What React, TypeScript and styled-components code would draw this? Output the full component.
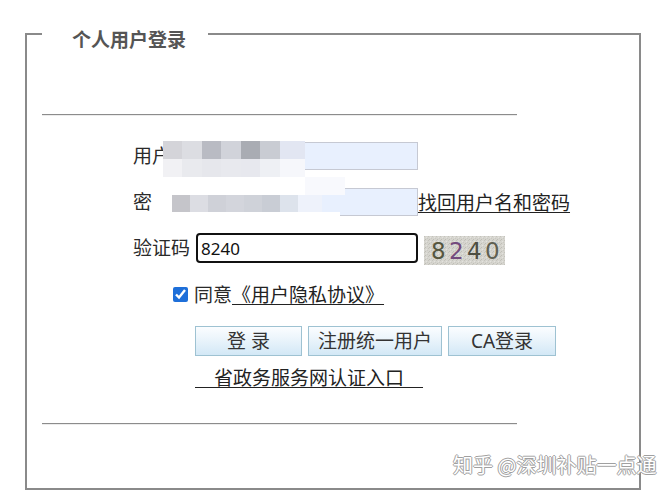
import React from 'react';
import styled, { createGlobalStyle } from 'styled-components';

const GlobalStyle = createGlobalStyle`
  html, body {
    margin: 0;
    padding: 0;
    background: #ffffff;
  }
  body {
    font-family: "Noto Sans", "Noto Sans CJK SC", sans-serif;
    color: #222;
  }
`;

const Page = styled.div`
  position: relative;
  width: 668px;
  height: 496px;
  padding-top: 16px;
  padding-left: 25px;
  box-sizing: border-box;
  overflow: hidden;
`;

const Panel = styled.fieldset`
  margin: 0;
  width: 616px;
  height: 474px;
  box-sizing: border-box;
  border: 2px solid #8a8a8a;
  padding: 0 0 0 15px;
  min-width: 0;
`;

const Legend = styled.legend`
  margin-left: 0;
  padding: 12px 22px 0 30px;
  font-size: 19px;
  line-height: 24px;
  font-weight: 700;
  color: #555;
`;

const Rule = styled.hr<{ $top: number }>`
  width: 475px;
  margin: ${p => p.$top}px 0 0 0;
  height: 0;
  border: 0;
  border-top: 1px solid #8c8c8c;
  border-bottom: 1px solid #ececec;
`;

const Form = styled.div`
  position: relative;
  padding-left: 91px;
  margin-top: 25px;
  display: flex;
  flex-direction: column;
`;

const Row = styled.div`
  display: flex;
  align-items: center;
  height: 30px;
  margin-bottom: 16px;
  font-size: 19px;
  color: #2a2a2a;
`;

const Label = styled.span`
  width: 63px;
  white-space: nowrap;
  line-height: 24px;
`;

const Field = styled.input<{ $focused?: boolean }>`
  width: 222px;
  box-sizing: border-box;
  height: ${p => (p.$focused ? 30 : 28)}px;
  font: inherit;
  font-size: 17px;
  color: #111;
  padding: 0 3px;
  outline: none;
  background: ${p => (p.$focused ? '#ffffff' : '#e8f0fe')};
  border: ${p => (p.$focused ? '2px solid #111' : '1px solid #c6c9d3')};
  border-radius: ${p => (p.$focused ? 4 : 0)}px;
`;

const TextLink = styled.a`
  color: #222;
  text-decoration: underline;
  text-underline-offset: 2px;
  text-decoration-thickness: 1px;
  font-size: 19px;
  white-space: nowrap;
  cursor: pointer;
`;

const Captcha = styled.svg`
  margin-left: 6px;
  margin-top: 4px;
  display: block;
`;

const AgreeRow = styled.label`
  display: flex;
  align-items: center;
  gap: 6px;
  padding-left: 40px;
  height: 22px;
  margin-top: 4px;
  font-size: 19px;
  color: #2a2a2a;
`;

const Check = styled.input`
  margin: 0;
  width: 15px;
  height: 15px;
  accent-color: #1e6fd9;
`;

const ButtonBar = styled.div`
  display: flex;
  gap: 6px;
  padding-left: 62px;
  margin-top: 21px;
`;

const ActionButton = styled.button<{ $w: number }>`
  width: ${p => p.$w}px;
  height: 30px;
  font-family: inherit;
  font-size: 19px;
  line-height: 26px;
  color: #333;
  padding: 0;
  border: 1px solid #9ec2d2;
  background: linear-gradient(#fbfdff 0%, #eaf4fb 45%, #d3e8f6 100%);
  cursor: pointer;
`;

const PortalRow = styled.div`
  padding-left: 62px;
  margin-top: 10px;
  line-height: 24px;
`;

const Mosaic = styled.div`
  position: absolute;
  left: 121px;
  top: 0;
  display: flex;
  flex-direction: column;
  pointer-events: none;
`;

const MosaicRow = styled.div<{ $h: number; $indent?: number }>`
  display: flex;
  height: ${p => p.$h}px;
  padding-left: ${p => p.$indent ?? 0}px;
`;

const Cell = styled.div<{ $w: number; $c: string }>`
  width: ${p => p.$w}px;
  height: 100%;
  background: ${p => p.$c};
`;

const Watermark = styled.div`
  position: absolute;
  left: 453px;
  top: 452px;
  font-family: "Noto Sans CJK SC", sans-serif;
  font-size: 20px;
  line-height: 26px;
  color: #ffffff;
  text-shadow: -1px 0 #a0a0a0, 1px 0 #a0a0a0, 0 -1px #a0a0a0, 0 1px #a0a0a0;
  white-space: nowrap;
`;

const blur: { h: number; indent?: number; cells: [number, string][] }[] = [
  {
    h: 18,
    cells: [
      [19, '#d4d4d9'], [20, '#dcdde2'], [19, '#b9bbc3'], [20, '#d1d3da'],
      [19, '#a9acb3'], [20, '#c9ccd3'], [25, '#e2e6f2'],
    ],
  },
  {
    h: 18,
    cells: [
      [19, '#f1f1f4'], [20, '#e9eaee'], [19, '#e6e7ec'], [20, '#e8e9ee'],
      [19, '#e7e8ee'], [20, '#eef0f4'], [25, '#f6f7fb'],
    ],
  },
  { h: 18, cells: [[142, '#ffffff'], [40, '#f8f9fd']] },
  {
    h: 17,
    cells: [
      [9, '#ffffff'], [18, '#c5c5ca'], [18, '#dcdde3'], [18, '#cfd1d8'],
      [18, '#d3d5dc'], [18, '#cfd2d9'], [18, '#c9cdd5'], [18, '#dde3ec'],
      [24, '#eef2fb'],
    ],
  },
  { h: 8, indent: 27, cells: [[150, '#ffffff']] },
];

const CaptchaImage: React.FC = () => (
  <Captcha width="81" height="29" viewBox="0 0 81 29">
    <defs>
      <pattern id="grain" width="4" height="4" patternUnits="userSpaceOnUse">
        <rect width="4" height="4" fill="#d6d5cf" />
        <rect x="0" y="0" width="1" height="1" fill="#c4c3bc" />
        <rect x="2" y="1" width="1" height="1" fill="#e4e3de" />
        <rect x="1" y="3" width="1" height="1" fill="#bfbeb6" />
        <rect x="3" y="2" width="1" height="1" fill="#cac9c2" />
      </pattern>
    </defs>
    <rect width="81" height="29" fill="url(#grain)" />
    <g fontFamily="'DejaVu Sans', sans-serif" fontSize="23" fontWeight="400">
      <text x="7" y="23" fill="#55563f">8</text>
      <text x="25" y="23" fill="#744a7e">2</text>
      <text x="43" y="23" fill="#4d4e42">4</text>
      <text x="61" y="23" fill="#5f6052">0</text>
    </g>
  </Captcha>
);

const App: React.FC = () => {
  return (
    <Page>
      <GlobalStyle />
      <Panel>
        <Legend>个人用户登录</Legend>
        <Rule $top={62} />

        <Form>
          <Row>
            <Label>用户名</Label>
            <Field defaultValue="" />
          </Row>
          <Row>
            <Label>密&#12288;码</Label>
            <Field type="password" defaultValue="" />
            <TextLink>找回用户名和密码</TextLink>
          </Row>
          <Row>
            <Label>验证码</Label>
            <Field $focused defaultValue="8240" />
            <CaptchaImage />
          </Row>

          <AgreeRow>
            <Check type="checkbox" defaultChecked />
            <span>
              同意<TextLink>《用户隐私协议》</TextLink>
            </span>
          </AgreeRow>

          <ButtonBar>
            <ActionButton $w={107}>登 录</ActionButton>
            <ActionButton $w={134}>注册统一用户</ActionButton>
            <ActionButton $w={108}>CA登录</ActionButton>
          </ButtonBar>

          <PortalRow>
            <TextLink>&#12288;省政务服务网认证入口&#12288;</TextLink>
          </PortalRow>

          <Mosaic>
            {blur.map((r, i) => (
              <MosaicRow key={i} $h={r.h} $indent={r.indent}>
                {r.cells.map(([w, c], j) => (
                  <Cell key={j} $w={w} $c={c} />
                ))}
              </MosaicRow>
            ))}
          </Mosaic>
        </Form>

        <Rule $top={32} />
      </Panel>
      <Watermark>知乎 @深圳补贴一点通</Watermark>
    </Page>
  );
};

export default App;
